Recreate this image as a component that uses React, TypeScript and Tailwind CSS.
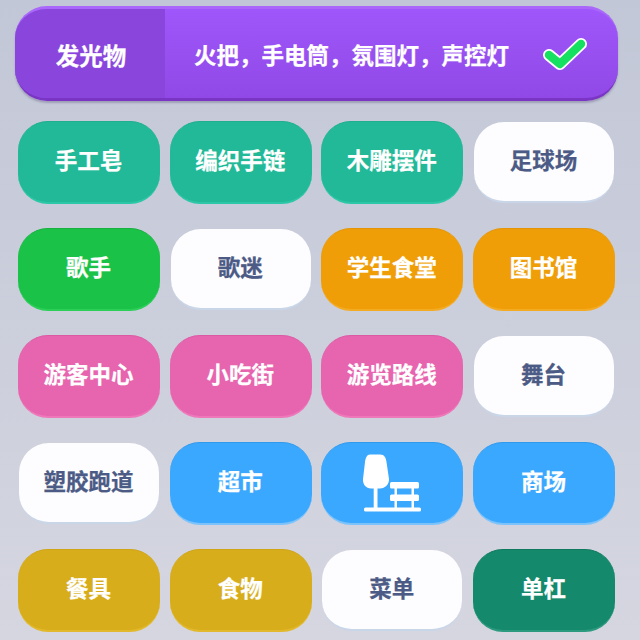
const FONT = "[font-family:'Noto_Sans_CJK_SC','Noto_Sans',sans-serif]";

type Kind = "teal" | "white" | "green" | "orange" | "pink" | "blue" | "gold" | "deep";

const styles: Record<Kind, string> = {
  teal: "bg-[#21b997] text-white border-t border-t-[#1fae8e] border-b-2 border-b-[#2cc7a6]",
  white: "bg-[#fdfdff] text-[#4c5b85] my-[1px] mx-[1px] border-b-2 border-b-[#c9d6e8]",
  green: "bg-[#1ac247] text-white border-t border-t-[#16b03f] border-b-2 border-b-[#2bcf58]",
  orange: "bg-[#ef9e08] text-white border-t border-t-[#e49606] border-b-2 border-b-[#f4ab24]",
  pink: "bg-[#e764ae] text-white border-t border-t-[#dc5aa4] border-b-2 border-b-[#ee78ba]",
  blue: "bg-[#3ba8ff] text-white border-t border-t-[#3199ec] border-b-2 border-b-[#7cc3fb]",
  gold: "bg-[#d8ad1b] text-white border-t border-t-[#cfa415] border-b-2 border-b-[#e2b92c]",
  deep: "bg-[#14896b] text-white border-t border-t-[#107a5f] border-b-2 border-b-[#2c9a7e]",
};

const rows: [string, Kind][][] = [
  [["手工皂", "teal"], ["编织手链", "teal"], ["木雕摆件", "teal"], ["足球场", "white"]],
  [["歌手", "green"], ["歌迷", "white"], ["学生食堂", "orange"], ["图书馆", "orange"]],
  [["游客中心", "pink"], ["小吃街", "pink"], ["游览路线", "pink"], ["舞台", "white"]],
  [["塑胶跑道", "white"], ["超市", "blue"], ["", "blue"], ["商场", "blue"]],
  [["餐具", "gold"], ["食物", "gold"], ["菜单", "white"], ["单杠", "deep"]],
];

function ParkIcon() {
  return (
    <svg width="60" height="60" viewBox="0 0 60 60" fill="white">
      <path d="M8 1.500 H18 C22.500 1.500 24 5 24.500 9 L27 26 C27.500 31 23 35.500 18 35.500 H9 C4 35.500 0.500 31 1 26 L3 9 C3.500 5 5 1.500 8 1.500 Z" />
      <rect x="11.700" y="34" width="3.800" height="24" />
      <rect x="28" y="29" width="29" height="6.500" rx="1.500" />
      <rect x="28" y="41.500" width="29" height="6.500" rx="1.500" />
      <rect x="32.500" y="35" width="2.500" height="23" />
      <rect x="49.500" y="35" width="2.500" height="23" />
      <rect x="2" y="54.500" width="57" height="4" rx="1.500" />
    </svg>
  );
}

function Tile({ label, kind }: { label: string; kind: Kind }) {
  return (
    <div className={`flex items-center justify-center rounded-[30px] text-[22.500px] font-bold leading-none [-webkit-text-stroke:0.25px_currentColor] ${styles[kind]}`}>
      {label ? <span className="pr-[1px] pb-[5px]">{label}</span> : <ParkIcon />}
    </div>
  );
}

export default function App() {
  return (
    <div className={`h-[640px] w-[640px] overflow-hidden bg-gradient-to-b from-[#c2c7d7] to-[#d5d6e0] pl-[15px] pt-[6px] ${FONT}`}>
      <div className="flex h-[95px] w-[603px] overflow-hidden rounded-[32px] border-t-[3px] border-b-[3px] border-t-[#a968fa] border-b-[#7a35c4] bg-gradient-to-b from-[#9f57fb] to-[#9048e6] shadow-[0_2px_2px_rgba(90,80,120,0.35)]">
        <div className="flex w-[150px] shrink-0 items-center justify-center bg-[#8a46dc] pl-[2px] pt-[5px] text-[23.500px] font-bold text-white [-webkit-text-stroke:0.25px_currentColor]">
          发光物
        </div>
        <div className="flex flex-1 items-center pl-[29px] text-[22.500px] font-bold text-white [-webkit-text-stroke:0.25px_currentColor]">
          <span className="whitespace-nowrap pt-[2px]">火把，手电筒，氛围灯，声控灯</span>
          <svg className="ml-[33px]" width="46" height="34" viewBox="0 0 46 34">
            <path d="M7 18 L18 27 L39 7" fill="none" stroke="white" strokeWidth="12" strokeLinecap="round" strokeLinejoin="round" />
            <path d="M7 18 L18 27 L39 7" fill="none" stroke="#15e060" strokeWidth="8.500" strokeLinecap="round" strokeLinejoin="round" />
          </svg>
        </div>
      </div>
      <div className="mt-[20px] ml-[3px] grid w-[597px] grid-cols-4 auto-rows-[83px] gap-x-[9.500px] gap-y-[24px]">
        {rows.flat().map(([label, kind], i) => (
          <Tile key={i} label={label} kind={kind} />
        ))}
      </div>
    </div>
  );
}
